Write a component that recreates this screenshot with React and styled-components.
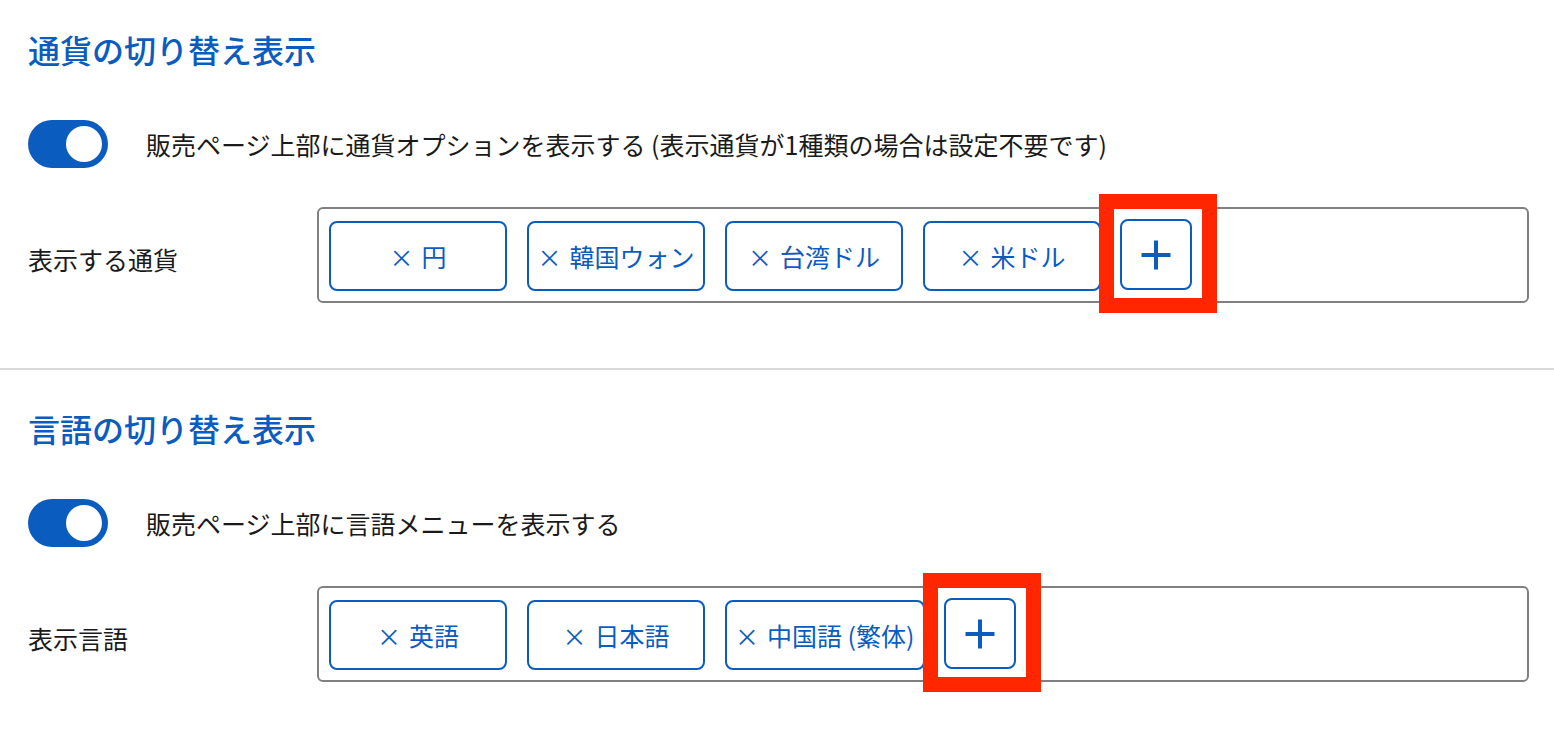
import React from 'react';
import styled, { createGlobalStyle } from 'styled-components';

const GlobalStyle = createGlobalStyle`
  html, body {
    margin: 0;
    padding: 0;
    background: #fff;
  }
  body {
    font-family: "Noto Sans CJK JP", "Noto Sans", sans-serif;
    color: #1a1a1a;
  }
`;

const Page = styled.div`
  width: 1554px;
  height: 738px;
  overflow: hidden;
`;

const Section = styled.section`
  padding: ${({ $first }) => ($first ? '25px' : '34px')} 25px 0 28px;
  padding-bottom: ${({ $last }) => ($last ? '0' : '65px')};
  border-bottom: ${({ $last }) => ($last ? 'none' : '2px solid #dadada')};
`;

const Title = styled.h2`
  margin: 0;
  font-size: 32px;
  line-height: 48px;
  font-weight: 500;
  color: #0b5cbf;
`;

const ToggleRow = styled.div`
  display: flex;
  align-items: center;
  gap: 38px;
  margin-top: 47px;
`;

const Switch = styled.div`
  width: 80px;
  height: 48px;
  border-radius: 24px;
  background: #0b5cbf;
  display: flex;
  align-items: center;
  justify-content: flex-end;
  padding: 0 6px;
  box-sizing: border-box;
  flex-shrink: 0;
`;

const Knob = styled.span`
  width: 36px;
  height: 36px;
  border-radius: 50%;
  background: #fff;
`;

const ToggleLabel = styled.span`
  font-size: 25px;
  line-height: 48px;
  color: #1a1a1a;
  white-space: nowrap;
`;

const FieldRow = styled.div`
  display: grid;
  grid-template-columns: 289px 1fr;
  align-items: center;
  margin-top: 39px;
`;

const FieldLabel = styled.span`
  font-size: 25px;
  line-height: 32px;
  padding-top: 8px;
`;

const ChipBox = styled.div`
  border: 2px solid #808080;
  border-radius: 6px;
  padding: 10px 10px 10px;
  display: flex;
  align-items: flex-start;
  gap: 20px;
`;

const Chip = styled.button`
  min-width: 178px;
  height: 70px;
  margin-top: 2px;
  padding: 0 8px;
  box-sizing: border-box;
  border: 2px solid #0b5cbf;
  border-radius: 8px;
  background: #fff;
  color: #0b5cbf;
  font-family: inherit;
  font-size: 25px;
  white-space: nowrap;
  display: flex;
  align-items: center;
  justify-content: center;
  gap: 8px;
`;

const Cross = styled.span`
  font-size: 24px;
`;

const AddWrap = styled.div`
  position: relative;
  margin-left: -1px;
`;

const AddButton = styled.button`
  width: 72px;
  height: 71px;
  box-sizing: border-box;
  border: 2px solid #0b5cbf;
  border-radius: 8px;
  background: #fff;
  padding: 0;
  display: flex;
  align-items: center;
  justify-content: center;
`;

const Highlight = styled.div`
  position: absolute;
  top: -25px;
  right: -25px;
  bottom: -23px;
  left: -21px;
  border: 15px solid #ff2600;
  pointer-events: none;
`;

const PlusIcon = () => (
  <svg width="32" height="32" viewBox="0 0 32 32">
    <path d="M16 1.5v29M1.5 16h29" stroke="#0b5cbf" strokeWidth="4" fill="none" />
  </svg>
);

const ChipField = ({ label, items }) => (
  <FieldRow>
    <FieldLabel>{label}</FieldLabel>
    <ChipBox>
      {items.map((item) => (
        <Chip key={item}>
          <Cross>×</Cross>
          {item}
        </Chip>
      ))}
      <AddWrap>
        <AddButton>
          <PlusIcon />
        </AddButton>
        <Highlight />
      </AddWrap>
    </ChipBox>
  </FieldRow>
);

const ToggleSetting = ({ text }) => (
  <ToggleRow>
    <Switch>
      <Knob />
    </Switch>
    <ToggleLabel>{text}</ToggleLabel>
  </ToggleRow>
);

export default function App() {
  return (
    <Page>
      <GlobalStyle />
      <Section $first>
        <Title>通貨の切り替え表示</Title>
        <ToggleSetting text="販売ページ上部に通貨オプションを表示する (表示通貨が1種類の場合は設定不要です)" />
        <ChipField label="表示する通貨" items={['円', '韓国ウォン', '台湾ドル', '米ドル']} />
      </Section>
      <Section $last>
        <Title>言語の切り替え表示</Title>
        <ToggleSetting text="販売ページ上部に言語メニューを表示する" />
        <ChipField label="表示言語" items={['英語', '日本語', '中国語 (繁体)']} />
      </Section>
    </Page>
  );
}
